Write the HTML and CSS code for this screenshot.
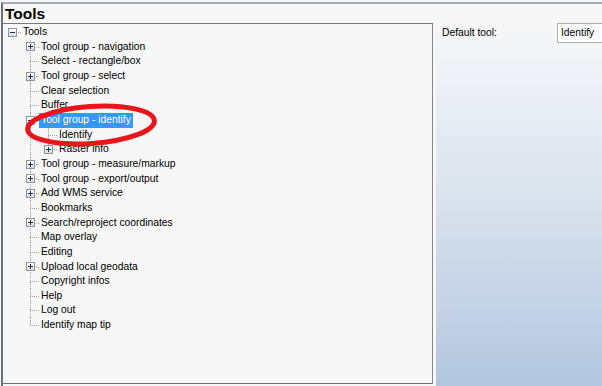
FILE: index.html
```html
<!DOCTYPE html>
<html lang="en">
<head>
    <meta charset="UTF-8">
    <title>Tools</title>
    <link rel="stylesheet" href="styles.css">
</head>
<body>
    <div class="frame">
        <h1 class="title">Tools</h1>

        <div class="main">
            <div class="tree-box">
                <div class="tree">
                    <div class="row"><span class="conn root"><span class="toggle minus"></span></span><span class="label">Tools</span></div>

                    <div class="row"><span class="gap"></span><span class="conn mid"><span class="toggle plus"></span></span><span class="label">Tool group - navigation</span></div>
                    <div class="row"><span class="gap"></span><span class="conn mid"></span><span class="label">Select - rectangle/box</span></div>
                    <div class="row"><span class="gap"></span><span class="conn mid"><span class="toggle plus"></span></span><span class="label">Tool group - select</span></div>
                    <div class="row"><span class="gap"></span><span class="conn mid"></span><span class="label">Clear selection</span></div>
                    <div class="row"><span class="gap"></span><span class="conn mid"></span><span class="label">Buffer</span></div>
                    <div class="row selected"><span class="gap"></span><span class="conn mid"><span class="toggle minus"></span></span><span class="label">Tool group - identify</span></div>
                    <div class="row"><span class="gap"></span><span class="gap pipe"></span><span class="conn mid"></span><span class="label">Identify</span></div>
                    <div class="row"><span class="gap"></span><span class="gap pipe"></span><span class="conn"><span class="toggle plus"></span></span><span class="label">Raster info</span></div>
                    <div class="row"><span class="gap"></span><span class="conn mid"><span class="toggle plus"></span></span><span class="label">Tool group - measure/markup</span></div>
                    <div class="row"><span class="gap"></span><span class="conn mid"><span class="toggle plus"></span></span><span class="label">Tool group - export/output</span></div>
                    <div class="row"><span class="gap"></span><span class="conn mid"><span class="toggle plus"></span></span><span class="label">Add WMS service</span></div>
                    <div class="row"><span class="gap"></span><span class="conn mid"></span><span class="label">Bookmarks</span></div>
                    <div class="row"><span class="gap"></span><span class="conn mid"><span class="toggle plus"></span></span><span class="label">Search/reproject coordinates</span></div>
                    <div class="row"><span class="gap"></span><span class="conn mid"></span><span class="label">Map overlay</span></div>
                    <div class="row"><span class="gap"></span><span class="conn mid"></span><span class="label">Editing</span></div>
                    <div class="row"><span class="gap"></span><span class="conn mid"><span class="toggle plus"></span></span><span class="label">Upload local geodata</span></div>
                    <div class="row"><span class="gap"></span><span class="conn mid"></span><span class="label">Copyright infos</span></div>
                    <div class="row"><span class="gap"></span><span class="conn mid"></span><span class="label">Help</span></div>
                    <div class="row"><span class="gap"></span><span class="conn mid"></span><span class="label">Log out</span></div>
                    <div class="row"><span class="gap"></span><span class="conn"></span><span class="label">Identify map tip</span></div>
                </div>

                <!-- hand drawn marker round the selected node -->
                <svg class="marker" width="145" height="52" viewBox="0 0 145 52">
                    <ellipse cx="71" cy="26" rx="63.5" ry="18.5" transform="rotate(-4 71 26)" fill="none" stroke="#e8161b" stroke-width="5"/>
                </svg>
            </div>

            <div class="props">
                <span class="props-label">Default tool:</span>
                <span class="select">Identify</span>
            </div>
        </div>
    </div>
</body>
</html>
```

FILE: styles.css
```css
* {
    box-sizing: border-box;
}

html, body {
    margin: 0;
    height: 100%;
}

body {
    background-color: #f7f7f7;
    color: #000;
    font-family: "Liberation Sans", Arial, sans-serif;
    font-size: 10.3px;
    overflow: hidden;
}

.frame {
    margin: 2px 0 0 1px;
    height: 384px;
    border-top: 2px solid #a4adb1;
    border-left: 2px solid #6b7074;
    display: flex;
    flex-direction: column;
}

.title {
    margin: 0;
    height: 19px;
    line-height: 19px;
    padding-left: 2px;
    font-size: 15.5px;
    font-weight: bold;
}

.main {
    flex: 1;
    display: flex;
}

.tree-box {
    position: relative;
    width: 430px;
    flex-shrink: 0;
    margin-bottom: 2px;
    padding-top: 1px;
    border-top: 1px solid #77797c;
    border-right: 1px solid #85888b;
    border-bottom: 1px solid #6f7275;
}

.row {
    display: flex;
    height: 14.67px;
    line-height: 14.67px;
}

.gap {
    width: 18px;
    flex-shrink: 0;
}
.gap.pipe {
    background: repeating-linear-gradient(#a0a0a0 0 1px, transparent 1px 2px) 9px 0 / 1px 100% no-repeat;
}

.conn {
    width: 18px;
    flex-shrink: 0;
    display: flex;
    align-items: center;
    padding-left: 5px;
    background:
        repeating-linear-gradient(90deg, #a0a0a0 0 1px, transparent 1px 2px) 9px 7px / 9px 1px no-repeat,
        repeating-linear-gradient(#a0a0a0 0 1px, transparent 1px 2px) 9px 0 / 1px 7px no-repeat;
}
.conn.mid {
    background:
        repeating-linear-gradient(90deg, #a0a0a0 0 1px, transparent 1px 2px) 9px 7px / 9px 1px no-repeat,
        repeating-linear-gradient(#a0a0a0 0 1px, transparent 1px 2px) 9px 0 / 1px 100% no-repeat;
}
.conn.root {
    background: repeating-linear-gradient(90deg, #a0a0a0 0 1px, transparent 1px 2px) 9px 7px / 9px 1px no-repeat;
}

.toggle {
    width: 9px;
    height: 9px;
    border: 1px solid #8f9698;
    background-color: #f4f4f4;
}
.toggle.minus {
    background:
        linear-gradient(#1f2f66, #1f2f66) center / 5px 1px no-repeat,
        linear-gradient(#ffffff, #dcdcdc);
}
.toggle.plus {
    background:
        linear-gradient(#1f2f66, #1f2f66) center / 5px 1px no-repeat,
        linear-gradient(#1f2f66, #1f2f66) center / 1px 5px no-repeat,
        linear-gradient(#ffffff, #dcdcdc);
}

.label {
    padding: 0 2px;
    white-space: nowrap;
}
.row.selected .label {
    background-color: #3399ff;
    color: #fff;
}

.marker {
    position: absolute;
    left: 17px;
    top: 75px;
}

.props {
    flex: 1;
    margin-left: 3px;
    padding-left: 6px;
    display: flex;
    align-items: flex-start;
    background: linear-gradient(#f7f7f7 0%, #f2f4f7 8%, #dce4ee 45%, #b3c6df 100%);
}

.props-label {
    width: 115px;
    flex-shrink: 0;
    line-height: 20px;
}

.select {
    width: 70px;
    flex-shrink: 0;
    height: 20px;
    line-height: 18px;
    padding-left: 3px;
    border: 1px solid #abadb3;
    background-color: #fff;
}
```
